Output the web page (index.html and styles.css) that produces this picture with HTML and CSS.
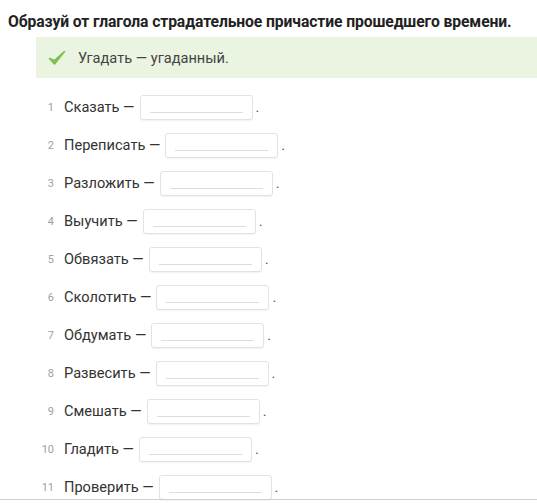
FILE: index.html
```html
<!DOCTYPE html>
<html lang="ru">
<head>
<meta charset="utf-8">
<link rel="stylesheet" href="styles.css">
</head>
<body>
<div class="page">
  <h1 class="title">Образуй от глагола страдательное причастие прошедшего времени.</h1>
  <div class="example">
    <svg class="check" width="18" height="16" viewBox="0 0 18 16"><path d="M1.5 8.5 L6.5 14 L16.5 1.5 L6.5 10.5 Z" fill="#7cc14e" stroke="#7cc14e" stroke-width="1.6" stroke-linejoin="round"/></svg>
    <span>Угадать — угаданный.</span>
  </div>
  <ol class="tasks">
    <li class="task"><span class="num">1</span><span class="word">Сказать —</span><span class="field"></span><span class="dot">.</span></li>
    <li class="task"><span class="num">2</span><span class="word">Переписать —</span><span class="field"></span><span class="dot">.</span></li>
    <li class="task"><span class="num">3</span><span class="word">Разложить —</span><span class="field"></span><span class="dot">.</span></li>
    <li class="task"><span class="num">4</span><span class="word">Выучить —</span><span class="field"></span><span class="dot">.</span></li>
    <li class="task"><span class="num">5</span><span class="word">Обвязать —</span><span class="field"></span><span class="dot">.</span></li>
    <li class="task"><span class="num">6</span><span class="word">Сколотить —</span><span class="field"></span><span class="dot">.</span></li>
    <li class="task"><span class="num">7</span><span class="word">Обдумать —</span><span class="field"></span><span class="dot">.</span></li>
    <li class="task"><span class="num">8</span><span class="word">Развесить —</span><span class="field"></span><span class="dot">.</span></li>
    <li class="task"><span class="num">9</span><span class="word">Смешать —</span><span class="field"></span><span class="dot">.</span></li>
    <li class="task"><span class="num">10</span><span class="word">Гладить —</span><span class="field"></span><span class="dot">.</span></li>
    <li class="task"><span class="num">11</span><span class="word">Проверить —</span><span class="field"></span><span class="dot">.</span></li>
  </ol>
</div>
<div class="bottom-line"></div>
</body>
</html>
```
FILE: styles.css
```css
html, body {
  margin: 0;
  padding: 0;
  background: #ffffff;
  height: 503px;
  overflow: hidden;
}
body {
  font-family: Roboto, "Liberation Sans", sans-serif;
  color: #333333;
  position: relative;
}
.page {
  padding: 12px 0 0 8px;
}
.title {
  margin: 0;
  font-size: 15.7px;
  font-weight: 700;
  line-height: 20px;
  color: #222222;
  letter-spacing: -0.1px;
}
.example {
  margin: 5px 0 0 28px;
  height: 41px;
  background: #eaf4e1;
  display: flex;
  align-items: center;
  padding-left: 12px;
  font-size: 14.6px;
  color: #444444;
}
.check {
  margin-right: 12px;
}
.tasks {
  list-style: none;
  margin: 0;
  padding: 10px 0 0 0;
}
.task {
  display: flex;
  align-items: center;
  height: 38px;
  font-size: 14.6px;
  color: #333333;
}
.num {
  width: 46px;
  text-align: right;
  font-size: 11px;
  color: #a0a0a0;
  margin-right: 10px;
}
.word {
  margin-right: 5px;
}
.field {
  width: 111px;
  height: 23px;
  border: 1px solid #e2e2e2;
  border-radius: 3px;
  box-shadow: 0 1px 1px rgba(0,0,0,0.05);
  position: relative;
  background: #fff;
}
.field::after {
  content: "";
  position: absolute;
  left: 9px;
  right: 9px;
  bottom: 6px;
  height: 1px;
  background: #dddddd;
}
.dot {
  margin-left: 3px;
  color: #555;
}
.bottom-line {
  position: absolute;
  left: 0;
  right: 0;
  top: 499px;
  height: 1px;
  background: #d0d0d0;
}
```
